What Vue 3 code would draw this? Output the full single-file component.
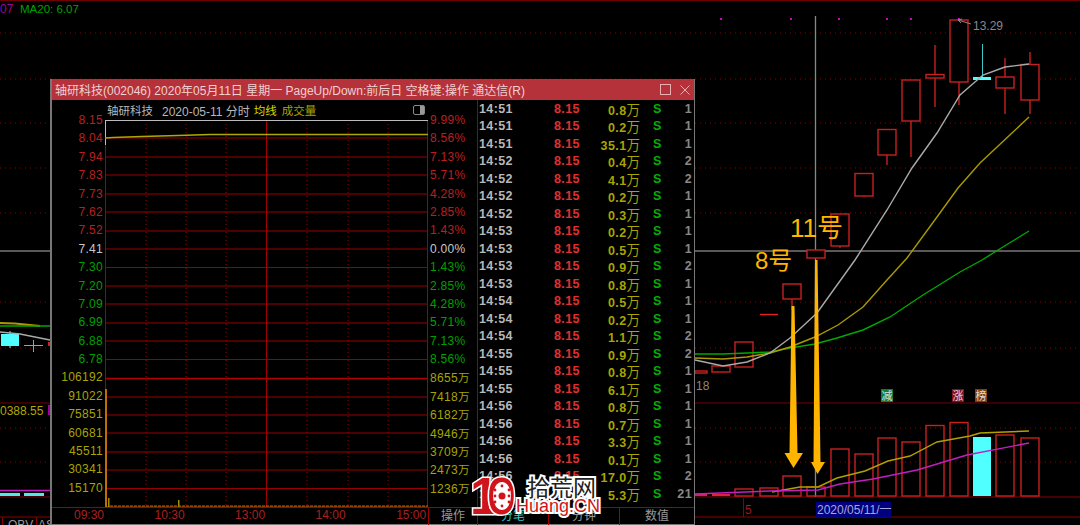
<template>
  <div class="screen">
    <!-- K线背景 -->
    <svg class="kline" width="1080" height="525" viewBox="0 0 1080 525">
      <line x1="0" y1="0.5" x2="1080" y2="0.5" stroke="#700000" />
      <line v-for="y in dotRows" :key="y" x1="0" :y1="y" x2="1080" :y2="y" stroke="#8a0000" stroke-dasharray="1 4" />
      <line x1="0" y1="403" x2="1080" y2="403" stroke="#7a0000" />
      <line x1="0" y1="497" x2="1080" y2="497" stroke="#8a0000" />
      <line x1="0" y1="517" x2="1080" y2="517" stroke="#8a0000" />
      <line x1="743.5" y1="498" x2="743.5" y2="517" stroke="#8a0000" />
      <line x1="2.5" y1="517" x2="2.5" y2="525" stroke="#8a0000" />
      <line x1="36.5" y1="517" x2="36.5" y2="525" stroke="#8a0000" />

      <rect v-for="x in pinkDots" :key="x" :x="x" y="18" width="2" height="2" fill="#d000d0" />

      <line x1="0" y1="251" x2="1080" y2="251" stroke="#777" stroke-width="1.3" />
      <line x1="815.5" y1="16" x2="815.5" y2="497" stroke="#888" stroke-width="1.3" />

      <g fill="none" stroke="#c82020" stroke-width="1.4">
        <line v-for="c in candles" :key="'w' + c.x" :x1="c.x + 9" :y1="c.wt" :x2="c.x + 9" :y2="c.wb" />
        <rect v-for="c in candles" :key="'b' + c.x" :x="c.x" :y="c.t" width="18" :height="c.b - c.t" fill="#000" />
        <line x1="760" y1="314.5" x2="778" y2="314.5" stroke="#e02020" />
        <rect x="695" y="371" width="12" height="2" />
      </g>

      <line x1="982.5" y1="44" x2="982.5" y2="78" stroke="#40c8c8" />
      <rect x="973" y="77" width="18" height="3" fill="#50ffff" />
      <rect x="1" y="334" width="18" height="12" fill="#50ffff" />
      <line x1="10" y1="331" x2="10" y2="348" stroke="#50ffff" />
      <line x1="24" y1="345.5" x2="43" y2="345.5" stroke="#40c8c8" />
      <line x1="33.5" y1="340" x2="33.5" y2="352" stroke="#40c8c8" />
      <rect x="48" y="342" width="3" height="4" fill="#d02020" />

      <g fill="none" stroke-width="1.4">
        <polyline :points="greenLine" stroke="#00a800" />
        <polyline :points="yellowLine" stroke="#a89a00" />
        <polyline :points="whiteLine" stroke="#aaa" />
        <polyline points="0,323 15,323.5 40,326" stroke="#a89a00" stroke-width="2" />
        <polyline points="0,326 51,326" stroke="#00a800" />
        <polyline points="0,332 20,334 50,340" stroke="#aaa" />
      </g>

      <!-- 成交量 -->
      <g fill="none" stroke="#c82020" stroke-width="1.4">
        <rect v-for="v in volBars" :key="v.x" :x="v.x" :y="v.t" width="18" :height="496 - v.t" />
      </g>
      <rect x="973" y="437" width="18" height="59" fill="#50ffff" />
      <rect x="695" y="494" width="12" height="2" fill="#e02040" />
      <rect x="712" y="494" width="18" height="2" fill="#e02040" />
      <rect x="0" y="493" width="20" height="3" fill="#50e8e8" />
      <rect x="24" y="493" width="20" height="3" fill="#50e8e8" />
      <g fill="none" stroke-width="1.4">
        <polyline :points="volYellow" stroke="#b0a000" />
        <polyline :points="volPink" stroke="#c020c0" />
        <polyline points="0,490.5 51,490.5" stroke="#c020c0" />
      </g>

      <!-- 手工标注箭头 -->
      <polygon points="791.5,306 794.5,306 797.5,453 803,453 793.5,468 784.5,453 789.5,453" fill="#ffb400" />
      <polygon points="815,260 817.5,260 820.5,462 825,462 817.5,474 811,462 813.5,462" fill="#ffb400" />

      <g class="notes">
        <text x="755" y="269" font-size="24">8号</text>
        <text x="790" y="237" font-size="26">11号</text>
      </g>

      <g class="small">
        <text x="973" y="30" fill="#888">13.29</text>
        <text x="696" y="390" fill="#888">18</text>
        <text x="0" y="415" fill="#b0a800">0388.55</text>
        <text x="0" y="13" fill="#a000a0">07</text>
        <text x="20" y="13" fill="#00a000" class="ma">MA20: 6.07</text>
        <text x="8" y="529" fill="#999">OBV</text>
        <text x="38" y="529" fill="#999">AS</text>
        <text x="745" y="514" fill="#a01818">5</text>
      </g>
      <path d="M958 20 L971 24 M958 20 L962 19 M958 20 L961 23" stroke="#888" fill="none" />
      <rect x="48" y="405" width="3" height="10" fill="#a000a0" />

      <rect x="816" y="502" width="75" height="15" fill="#000080" />
      <text x="817" y="514" class="small" fill="#a8a8d8">2020/05/11/一</text>

      <g class="badges">
        <rect x="881" y="389" width="12" height="13" fill="#108030" />
        <rect x="952" y="389" width="12" height="13" fill="#801020" />
        <rect x="975" y="389" width="12" height="13" fill="#804010" />
        <text x="881.5" y="400" fill="#ddd">减</text>
        <text x="952.5" y="400" fill="#ddd">涨</text>
        <text x="975.5" y="400" fill="#ddd">榜</text>
      </g>
    </svg>

    <!-- 分时弹窗 -->
    <div class="win">
      <div class="title">
        <span>轴研科技(002046) 2020年05月11日 星期一 PageUp/Down:前后日 空格键:操作 通达信(R)</span>
        <div class="title-btns">
          <span class="btn-max"></span>
          <svg width="10" height="10" viewBox="0 0 10 10">
            <path d="M0.5 0.5 L9.5 9.5 M9.5 0.5 L0.5 9.5" stroke="#e8b0b0" fill="none" />
          </svg>
        </div>
      </div>

      <div class="body">
        <div class="axis axis-left">
          <div v-for="(a, i) in leftAxis" :key="i" :class="a.c">{{ a.t }}</div>
        </div>

        <div class="center">
          <div class="head">
            <span class="cn">轴研科技</span>
            <span class="date">2020-05-11 分时</span>
            <span class="cn avg">均线</span>
            <span class="cn vol">成交量</span>
            <span class="toggle"><i></i></span>
          </div>
          <svg class="chart" width="323" height="387" viewBox="0 0 323 387">
            <line x1="0.5" y1="0" x2="0.5" y2="387" stroke="#a00000" />
            <line x1="322.5" y1="0" x2="322.5" y2="387" stroke="#a00000" />
            <line v-for="y in gridRows" :key="y" x1="0" :y1="y" x2="323" :y2="y" stroke="#980000" stroke-width="1.2" />
            <line v-for="x in gridDots" :key="x" :x1="x" y1="0" :x2="x" y2="387" stroke="#900000" stroke-dasharray="1 3" />
            <line x1="161.5" y1="0" x2="161.5" y2="387" stroke="#a00000" />
            <line x1="0" y1="258.5" x2="323" y2="258.5" stroke="#b00000" stroke-width="1.5" />
            <line x1="0" y1="0.5" x2="323" y2="0.5" stroke="#bbb" />
            <line x1="0.5" y1="0" x2="0.5" y2="25" stroke="#bbb" />
            <polyline points="0,18 8,17.5 37,16.5 73,15.5 105,14.5 323,14.5" fill="none" stroke="#b0a800" stroke-width="1.4" />
            <rect x="0" y="269" width="2" height="118" fill="#c07000" />
            <rect x="3" y="378" width="1.5" height="9" fill="#a09000" />
            <rect x="73" y="380" width="1.5" height="7" fill="#a09000" />
            <line x1="5" y1="386" x2="323" y2="386" stroke="#908000" stroke-dasharray="3 1" />
          </svg>
        </div>

        <div class="axis axis-right">
          <div v-for="(a, i) in rightAxis" :key="i" :class="a.c">
            {{ a.t }}<span v-if="a.u" class="wan-small">万</span>
          </div>
        </div>

        <div class="ticks">
          <div v-for="(r, i) in ticks" :key="i" class="tick">
            <span class="t-time">{{ r[0] }}</span>
            <span class="t-price">8.15</span>
            <span class="t-vol">{{ r[1] }}<span class="wan">万</span></span>
            <span class="t-s">S</span>
            <span class="t-n">{{ r[2] }}</span>
          </div>
        </div>
      </div>

      <div class="bottom">
        <div class="times">
          <span v-for="t in times" :key="t">{{ t }}</span>
        </div>
        <div class="tab tab-op">操作</div>
        <div class="tab tab-on">分笔</div>
        <div class="tab">分钟</div>
        <div class="tab tab-last">数值</div>
      </div>
    </div>

    <!-- 水印 -->
    <svg class="logo" width="140" height="50" viewBox="0 0 140 50">
      <g class="logo-num">
        <text x="0" y="40">1</text>
        <text x="17" y="40">0</text>
      </g>
      <ellipse cx="32" cy="22" rx="9" ry="14" fill="#fff" />
      <circle cx="32" cy="22" r="3.5" fill="#d0141c" />
      <circle v-for="d in gearDots" :key="d[0] + '-' + d[1]" :cx="d[0]" :cy="d[1]" r="1.4" fill="#d0141c" />
      <text x="57" y="22" class="logo-cn">拾荒网</text>
      <text x="46" y="38" class="logo-en">Huang.CN</text>
    </svg>
  </div>
</template>

<script setup>
const pts = (list) => list.map((p) => p.join(',')).join(' ')

const dotRows = [33, 79, 123, 168, 213, 302, 348, 428, 462]
const pinkDots = [720, 790, 838, 886, 910, 958]

const candles = [
  { x: 950, t: 20, b: 82, wt: 20, wb: 105 },
  { x: 996, t: 77, b: 88, wt: 58, wb: 114 },
  { x: 1021, t: 64.5, b: 100, wt: 52, wb: 114 },
  { x: 926, t: 74.5, b: 78, wt: 45, wb: 107 },
  { x: 902, t: 80, b: 121, wt: 80, wb: 157 },
  { x: 878, t: 129.5, b: 155, wt: 130, wb: 165 },
  { x: 855, t: 173.5, b: 196, wt: 174, wb: 197 },
  { x: 831, t: 214, b: 246, wt: 214, wb: 248 },
  { x: 807, t: 250, b: 258, wt: 250, wb: 258 },
  { x: 783, t: 284, b: 299, wt: 284, wb: 310 },
  { x: 735, t: 342, b: 367, wt: 342, wb: 367 },
  { x: 712, t: 366, b: 372, wt: 366, wb: 372 },
]

const whiteLine = pts([[695, 360], [723, 366], [747, 362], [770, 353], [790, 338], [817, 313], [855, 260], [887, 210], [912, 168], [937, 133], [960, 95], [983, 75], [1005, 67], [1029, 64]])
const yellowLine = pts([[695, 358], [723, 359], [747, 357], [770, 353], [790, 347], [815, 337], [838, 325], [863, 307], [887, 280], [907, 258], [937, 217], [958, 188], [980, 163], [1012, 133], [1029, 117]])
const greenLine = pts([[695, 354], [723, 354], [747, 353], [770, 352], [790, 348], [815, 344], [837, 338], [863, 330], [890, 317], [923, 295], [960, 272], [982, 260], [998, 250], [1029, 231]])

const volBars = [
  { x: 735, t: 489 }, { x: 760, t: 488 }, { x: 783, t: 476 }, { x: 807, t: 487 },
  { x: 831, t: 449 }, { x: 855, t: 454 }, { x: 878, t: 438 }, { x: 902, t: 442 },
  { x: 926, t: 425.5 }, { x: 950, t: 422.5 }, { x: 996, t: 435 }, { x: 1021, t: 438 },
]
const volYellow = pts([[772, 492], [800, 487], [818, 487], [837, 478], [865, 471], [888, 461], [910, 456], [937, 442], [970, 436], [980, 433], [1029, 431]])
const volPink = pts([[695, 494], [770, 491], [818, 490], [840, 484], [873, 479], [917, 470], [967, 455], [1029, 443]])

const leftAxis = [
  { t: '8.15', c: 'up' }, { t: '8.04', c: 'up' }, { t: '7.94', c: 'up' }, { t: '7.83', c: 'up' },
  { t: '7.73', c: 'up' }, { t: '7.62', c: 'up' }, { t: '7.52', c: 'up' }, { t: '7.41', c: 'flat' },
  { t: '7.30', c: 'down' }, { t: '7.20', c: 'down' }, { t: '7.09', c: 'down' }, { t: '6.99', c: 'down' },
  { t: '6.88', c: 'down' }, { t: '6.78', c: 'down' },
  { t: '106192', c: 'olive' }, { t: '91022', c: 'olive' }, { t: '75851', c: 'olive' }, { t: '60681', c: 'olive' },
  { t: '45511', c: 'olive' }, { t: '30341', c: 'olive' }, { t: '15170', c: 'olive' },
]

const rightAxis = [
  { t: '9.99%', c: 'up' }, { t: '8.56%', c: 'up' }, { t: '7.13%', c: 'up' }, { t: '5.71%', c: 'up' },
  { t: '4.28%', c: 'up' }, { t: '2.85%', c: 'up' }, { t: '1.43%', c: 'up' }, { t: '0.00%', c: 'flat' },
  { t: '1.43%', c: 'down' }, { t: '2.85%', c: 'down' }, { t: '4.28%', c: 'down' }, { t: '5.71%', c: 'down' },
  { t: '7.13%', c: 'down' }, { t: '8.56%', c: 'down' },
  { t: '8655', c: 'olive', u: 1 }, { t: '7418', c: 'olive', u: 1 }, { t: '6182', c: 'olive', u: 1 }, { t: '4946', c: 'olive', u: 1 },
  { t: '3709', c: 'olive', u: 1 }, { t: '2473', c: 'olive', u: 1 }, { t: '1236', c: 'olive', u: 1 },
]

// 行距约 18.4，从图表顶部算起
const gridRows = [18, 37, 55, 74, 92, 111, 129, 147.5, 166, 184, 203, 221, 239.5, 277, 295, 313, 332, 350, 368.5, 386.5]
const gridDots = [41, 81, 121, 202, 243, 283]

const ticks = [
  ['14:51', '0.8', 1], ['14:51', '0.2', 1], ['14:51', '35.1', 1], ['14:52', '0.4', 2],
  ['14:52', '4.1', 2], ['14:52', '0.2', 1], ['14:52', '0.3', 1], ['14:53', '0.2', 1],
  ['14:53', '0.5', 1], ['14:53', '0.9', 2], ['14:53', '0.8', 1], ['14:54', '0.5', 1],
  ['14:54', '0.2', 1], ['14:54', '1.1', 2], ['14:55', '0.9', 2], ['14:55', '0.8', 1],
  ['14:55', '6.1', 1], ['14:56', '0.8', 1], ['14:56', '0.7', 1], ['14:56', '3.3', 1],
  ['14:56', '0.1', 1], ['14:56', '17.0', 2], ['14:56', '5.3', 21],
]

const times = ['09:30', '10:30', '13:00', '14:00', '15:00']

const gearDots = [[32, 12], [32, 32], [25, 16], [39, 16], [25, 28], [39, 28], [25, 22], [39, 22]]
</script>

<style scoped>
.screen {
  position: relative;
  width: 1080px;
  height: 525px;
  overflow: hidden;
  background: #000;
  font-family: "Liberation Sans", "Noto Sans CJK SC", sans-serif;
}

.kline {
  position: absolute;
  left: 0;
  top: 0;
}

.notes text {
  fill: #ffb400;
  font-family: "Liberation Sans", "Noto Sans CJK SC", sans-serif;
}

.small,
.small text {
  font-size: 12px;
  font-family: "Liberation Sans", "Noto Sans CJK SC", sans-serif;
}

.small .ma {
  font-size: 11.5px;
}

.badges text {
  font-size: 11px;
  font-family: "Noto Sans CJK SC", sans-serif;
}

.win {
  position: absolute;
  left: 50px;
  top: 79px;
  width: 645px;
  height: 446px;
  box-sizing: border-box;
  display: flex;
  flex-direction: column;
  background: #000;
  border-left: 2px solid #777;
  border-right: 1px solid #777;
  border-bottom: 1px solid #777;
}

.title {
  height: 21px;
  flex: none;
  display: flex;
  align-items: center;
  justify-content: space-between;
  padding: 0 4px 0 3px;
  background: #b5323a;
  color: #f0d0d0;
  font-size: 12px;
  white-space: nowrap;
}

.title-btns {
  display: flex;
  align-items: center;
  gap: 9px;
}

.btn-max {
  width: 9px;
  height: 9px;
  border: 1px solid #e8b0b0;
}

.body {
  height: 407px;
  flex: none;
  display: flex;
}

.axis {
  box-sizing: border-box;
  flex: none;
  padding-top: 11px;
  font-size: 12px;
  letter-spacing: 0.3px;
}

.axis > div {
  height: 18.4px;
  line-height: 18.4px;
  white-space: nowrap;
}

.axis-left {
  width: 53px;
  padding-right: 2px;
  text-align: right;
}

.axis-right {
  width: 49px;
  padding-left: 2px;
}

.up { color: #b82020; }
.flat { color: #c8c8c8; }
.down { color: #00a000; }
.olive { color: #a8a400; }

.center {
  width: 323px;
  flex: none;
  display: flex;
  flex-direction: column;
}

.head {
  position: relative;
  height: 20px;
  flex: none;
  display: flex;
  align-items: center;
  gap: 4px;
  padding-left: 2px;
  color: #b8b8b8;
  font-size: 12px;
  white-space: nowrap;
}

.head .cn {
  font-size: 11.5px;
}

.head .date {
  margin-left: 5px;
}

.head .avg {
  color: #d8d800;
}

.head .vol {
  margin-left: 1px;
  color: #a8a400;
}

.toggle {
  position: absolute;
  right: 3px;
  top: 5px;
  width: 10px;
  height: 8px;
  border: 1px solid #888;
  border-radius: 2px;
}

.toggle i {
  position: absolute;
  right: 0;
  top: 0;
  width: 4px;
  height: 8px;
  background: #999;
}

.chart {
  display: block;
}

.ticks {
  flex: 1;
  padding-top: 0.5px;
  border-left: 1px solid #a00000;
  font-size: 12.5px;
  font-weight: 700;
  letter-spacing: 0.4px;
}

.tick {
  height: 17.5px;
  line-height: 17.5px;
  display: flex;
  white-space: nowrap;
}

.t-time {
  width: 75px;
  padding-left: 1px;
  color: #b8b8b8;
}

.t-price {
  width: 28px;
  color: #e03030;
}

.t-vol {
  width: 58px;
  text-align: right;
  color: #a8a400;
}

.t-s {
  width: 12px;
  margin-left: 13px;
  color: #00b000;
}

.t-n {
  width: 27px;
  text-align: right;
  color: #888;
}

.wan {
  font-family: "Noto Sans CJK SC", sans-serif;
  font-weight: 400;
  font-size: 13.5px;
  letter-spacing: 0;
}

.wan-small {
  font-family: "Noto Sans CJK SC", sans-serif;
  font-size: 11.5px;
  letter-spacing: 0;
}

.bottom {
  flex: 1;
  display: flex;
  border-top: 1px solid #a00000;
  font-size: 12px;
}

.times {
  width: 376px;
  flex: none;
  box-sizing: border-box;
  display: flex;
  gap: 50.5px;
  padding-left: 22px;
  line-height: 15px;
  color: #a82020;
}

.tab {
  width: 71px;
  flex: none;
  box-sizing: border-box;
  border-right: 1px solid #a00000;
  text-align: center;
  line-height: 17px;
  color: #999;
}

.tab-op {
  width: 50px;
  border-left: 1px solid #a00000;
}

.tab-on {
  color: #30c8c8;
}

.tab-last {
  flex: 1;
  border-right: 0;
}

.logo {
  position: absolute;
  left: 470px;
  top: 474px;
}

.logo-num text {
  font-family: "Liberation Sans", sans-serif;
  font-size: 52px;
  font-weight: 700;
  fill: #d0141c;
  stroke: #fff;
  stroke-width: 3px;
  paint-order: stroke;
}

.logo-cn {
  font-family: "Noto Sans CJK SC", sans-serif;
  font-size: 23px;
  fill: #222;
  stroke: #fff;
  stroke-width: 4px;
  paint-order: stroke;
}

.logo-en {
  font-family: "Liberation Sans", sans-serif;
  font-size: 18px;
  fill: #d0141c;
  stroke: #fff;
  stroke-width: 4px;
  paint-order: stroke;
}
</style>
